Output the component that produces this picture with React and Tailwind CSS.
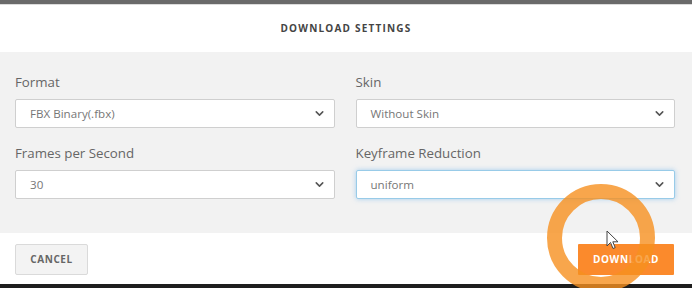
import { ChevronDown } from 'lucide-react';

const font = { fontFamily: '"Open Sans", "Noto Sans", sans-serif' };

function Field({ label, value, focused }) {
  return (
    <div className="flex flex-col">
      <label className="text-[13.3px] leading-[18px] text-[#666] mb-[8px]">{label}</label>
      <div
        className={
          'h-[29px] bg-white rounded-[2px] flex items-center justify-between pl-[14px] pr-[8px] ' +
          (focused
            ? 'border border-[#98cbe8] shadow-[0_0_5px_rgba(102,175,233,0.55)]'
            : 'border border-[#cfcfcf]')
        }
      >
        <span className="text-[11.6px] text-[#777]">{value}</span>
        <ChevronDown size={13} strokeWidth={2.8} className="text-[#555]" />
      </div>
    </div>
  );
}

export default function App() {
  return (
    <div className="relative w-[692px] h-[288px] flex flex-col overflow-hidden bg-white" style={font}>
      {/* window chrome above */}
      <div className="h-[4px] bg-[#6a6a6a]" />
      <div className="h-px bg-[#dcdcdc]" />

      {/* Header */}
      <div className="h-[47px] flex items-center justify-center">
        <h2 className="text-[10px] font-bold tracking-[1.2px] text-[#444]">DOWNLOAD SETTINGS</h2>
      </div>

      {/* Body */}
      <div className="h-[181px] bg-[#f2f2f2] pl-[15px] pr-[17px] pt-[21px] grid grid-cols-2 gap-x-[21px] gap-y-[16px] content-start">
        <Field label="Format" value="FBX Binary(.fbx)" />
        <Field label="Skin" value="Without Skin" />
        <Field label="Frames per Second" value="30" />
        <Field label="Keyframe Reduction" value="uniform" focused />
      </div>

      {/* Footer */}
      <div className="h-[51px] pl-[15px] pr-[18px] pt-[11px] flex items-start justify-between">
        <button className="w-[73px] h-[31px] bg-[#f3f3f3] border border-[#dadada] rounded-[2px] text-[10px] font-bold tracking-[0.6px] text-[#666]">
          CANCEL
        </button>
        <button className="w-[96px] h-[31px] bg-[#fb8a2c] rounded-[1px] text-[10px] font-bold tracking-[0.6px] text-white">
          DOWN<span className="opacity-40">L</span>OAD
        </button>
      </div>

      <div className="h-[4px] bg-[#1e1e1e]" />

      {/* click highlight ring */}
      <div className="absolute left-[547px] top-[184px] w-[108px] h-[108px] rounded-full border-[15px] border-[#f6901f]/80 pointer-events-none" />

      {/* mouse cursor */}
      <svg className="absolute left-[606px] top-[230px]" width="14" height="21" viewBox="0 0 14 21">
        <path d="M1 1 L1 16 L4.5 12.5 L7 18.5 L9.2 17.6 L6.8 11.8 L12 11.8 Z" fill="#fff" stroke="#444" strokeWidth="1" strokeLinejoin="round" />
      </svg>
    </div>
  );
}
